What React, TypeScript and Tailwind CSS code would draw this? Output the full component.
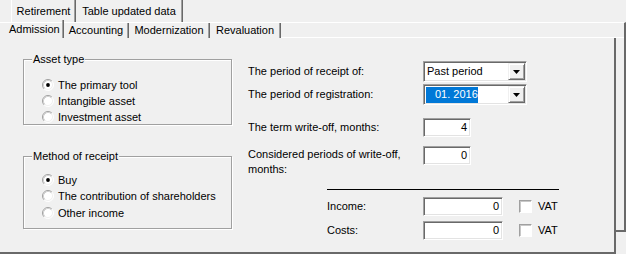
import React from "react";

const sunken =
  "border border-t-[#a0a0a0] border-l-[#a0a0a0] border-b-white border-r-white shadow-[inset_1px_1px_0_#696969,inset_-1px_-1px_0_#e3e3e3] bg-white";

const sepClass =
  "border-r border-r-[#696969] shadow-[inset_-1px_0_0_#a0a0a0]";

const Radio: React.FC<{ checked?: boolean }> = ({ checked }) => (
  <svg width="12" height="12" viewBox="0 0 12 12" className="shrink-0">
    <circle cx="6" cy="6" r="5" fill="white" />
    <path d="M2.11 9.89 A5.5 5.5 0 0 1 9.89 2.11" fill="none" stroke="#a0a0a0" />
    <path d="M9.89 2.11 A5.5 5.5 0 0 1 2.11 9.89" fill="none" stroke="#ffffff" />
    <path d="M2.82 9.18 A4.5 4.5 0 0 1 9.18 2.82" fill="none" stroke="#d0d0d0" />
    <path d="M9.18 2.82 A4.5 4.5 0 0 1 2.82 9.18" fill="none" stroke="#f0f0f0" />
    {checked && <circle cx="6" cy="6" r="1.9" fill="black" />}
  </svg>
);

const RadioRow: React.FC<{ label: string; checked?: boolean }> = ({ label, checked }) => (
  <div className="flex items-center h-[16px] gap-[4px]">
    <Radio checked={checked} />
    <span>{label}</span>
  </div>
);

const GroupBox: React.FC<{ title: string; className: string; children: React.ReactNode }> = ({
  title,
  className,
  children,
}) => (
  <div
    className={`relative w-[209px] border border-[#a0a0a0] shadow-[1px_1px_0_white,inset_1px_1px_0_white] ${className}`}
  >
    <span className="absolute -top-[8px] left-[8px] px-[1px] bg-[#f0f0f0] leading-[14px]">{title}</span>
    {children}
  </div>
);

const DropButton: React.FC = () => (
  <div className="w-[17px] h-[17px] flex items-center justify-center bg-[#f0f0f0] border border-t-[#f0f0f0] border-l-[#f0f0f0] border-b-[#696969] border-r-[#696969] shadow-[inset_1px_1px_0_white,inset_-1px_-1px_0_#a0a0a0]">
    <svg width="7" height="4" viewBox="0 0 7 4">
      <path d="M0 0 H7 L3.5 4 Z" fill="black" />
    </svg>
  </div>
);

const Combo: React.FC<{ children: React.ReactNode }> = ({ children }) => (
  <div className={`w-[104px] h-[21px] flex items-center justify-between pl-[2px] pr-[1px] ${sunken}`}>
    <div className="flex-1 h-full flex items-center">{children}</div>
    <DropButton />
  </div>
);

const NumInput: React.FC<{ value: string; w: string }> = ({ value, w }) => (
  <div className={`${w} h-[19px] flex items-center justify-end pr-[3px] ${sunken}`}>{value}</div>
);

const Checkbox: React.FC = () => (
  <div className="w-[13px] h-[13px] bg-white border border-t-[#a0a0a0] border-l-[#a0a0a0] border-b-white border-r-white shadow-[inset_1px_1px_0_#c8c8c8]" />
);

export default function App() {
  return (
    <div className="w-[626px] h-[254px] bg-[#f0f0f0] overflow-hidden text-[11px] text-black font-['Liberation_Sans',Arial,sans-serif]">
      {/* back row of tabs */}
      <div className="flex h-[22px]">
        <div className="w-[11px]" />
        <div className={`w-[65px] flex items-center justify-center border-l border-l-white ${sepClass}`}>
          Retirement
        </div>
        <div className={`w-[107px] flex items-center justify-center ${sepClass}`}>Table updated data</div>
      </div>

      {/* back page */}
      <div className="h-[210px] w-[626px] border-t border-t-white border-r-2 border-r-[#696969] border-b-2 border-b-[#696969]">
        {/* front row of tabs */}
        <div className="flex h-[15px]">
          <div className={`w-[64px] -mt-[3px] h-[18px] flex items-center pl-[9px] ${sepClass}`}>Admission</div>
          <div className={`w-[65px] flex items-center justify-center ${sepClass}`}>Accounting</div>
          <div className={`w-[81px] flex items-center justify-center ${sepClass}`}>Modernization</div>
          <div className={`w-[71px] flex items-center justify-center ${sepClass}`}>Revaluation</div>
          <div className="flex-1 border-b border-b-white" />
        </div>

        {/* front page */}
        <div className="w-[616px] h-[216px] bg-[#f0f0f0] border-r-2 border-r-[#696969] border-b-2 border-b-[#696969] flex">
          <div className="pl-[23px] pt-[21px]">
            <GroupBox title="Asset type" className="h-[66px] pt-[17px] pl-[18px]">
              <RadioRow label="The primary tool" checked />
              <RadioRow label="Intangible asset" />
              <RadioRow label="Investment asset" />
            </GroupBox>
            <GroupBox title="Method of receipt" className="mt-[31px] h-[73px] pt-[15px] pl-[18px]">
              <RadioRow label="Buy" checked />
              <RadioRow label="The contribution of shareholders" />
              <div className="mt-[1px]">
                <RadioRow label="Other income" />
              </div>
            </GroupBox>
          </div>

          <div className="ml-[16px] pt-[23px]">
            <div className="flex items-center h-[21px]">
              <div className="w-[175px]">The period of receipt of:</div>
              <Combo>
                <span className="pl-[1px]">Past period</span>
              </Combo>
            </div>
            <div className="flex items-center h-[21px] mt-[2px]">
              <div className="w-[175px]">The period of registration:</div>
              <Combo>
                <span className="h-[16px] w-[52px] flex items-center pl-[9px] bg-[#0078d7] text-white whitespace-pre">
                  01. 2016
                </span>
              </Combo>
            </div>
            <div className="flex items-center h-[18px] mt-[13px]">
              <div className="w-[175px]">The term write-off, months:</div>
              <NumInput value="4" w="w-[48px]" />
            </div>
            <div className="flex items-start mt-[10px]">
              <div className="w-[175px]">
                <div className="w-[165px] leading-[15px] pt-[1px]">Considered periods of write-off, months:</div>
              </div>
              <NumInput value="0" w="w-[48px]" />
            </div>

            <div className="ml-[79px] mt-[12px] w-[232px] h-px bg-black" />

            <div className="ml-[79px] mt-[7px] flex items-center h-[19px]">
              <div className="w-[96px]">Income:</div>
              <NumInput value="0" w="w-[80px]" />
              <div className="ml-[16px]">
                <Checkbox />
              </div>
              <span className="ml-[6px]">VAT</span>
            </div>
            <div className="ml-[79px] mt-[5px] flex items-center h-[19px]">
              <div className="w-[96px]">Costs:</div>
              <NumInput value="0" w="w-[80px]" />
              <div className="ml-[16px]">
                <Checkbox />
              </div>
              <span className="ml-[6px]">VAT</span>
            </div>
          </div>
        </div>
      </div>
    </div>
  );
}
